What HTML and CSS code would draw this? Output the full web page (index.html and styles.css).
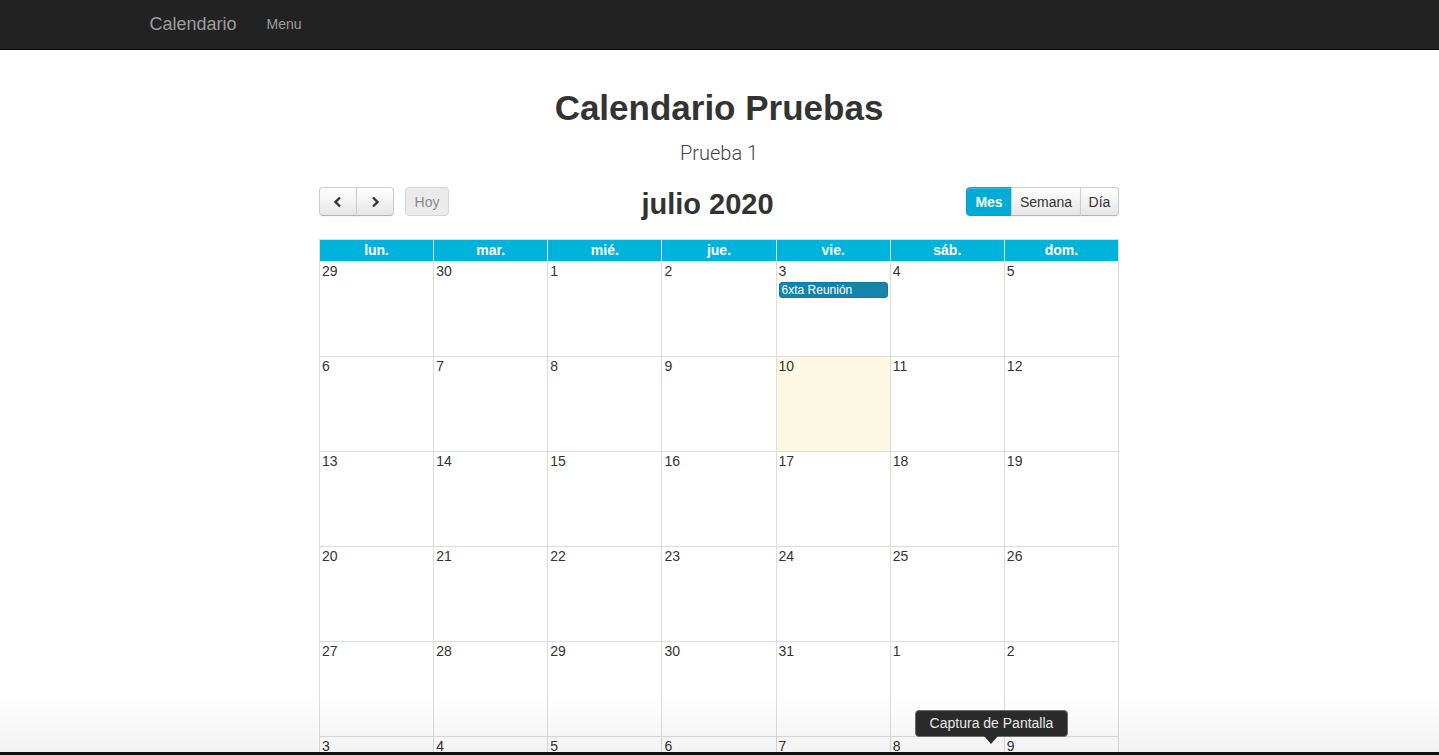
FILE: index.html
```html
<!DOCTYPE html>
<html lang="es">
<head>
<meta charset="utf-8">
<title>Calendario</title>
<link rel="stylesheet" href="styles.css">
</head>
<body>
<nav class="navbar">
  <div class="nav-inner">
    <span class="brand">Calendario</span>
    <span class="nav-link">Menu</span>
  </div>
</nav>

<main class="page">
  <h1 class="title">Calendario Pruebas</h1>
  <p class="subtitle">Prueba 1</p>

  <section class="calendar">
    <div class="toolbar">
      <div class="tb-left">
        <div class="btn-group">
          <button class="btn btn-icon" aria-label="prev">
            <svg width="12" height="12" viewBox="0 0 12 12"><path d="M8 1.5 L3.5 6 L8 10.5" fill="none" stroke="#333" stroke-width="2.4"/></svg>
          </button>
          <button class="btn btn-icon" aria-label="next">
            <svg width="12" height="12" viewBox="0 0 12 12"><path d="M4 1.5 L8.5 6 L4 10.5" fill="none" stroke="#333" stroke-width="2.4"/></svg>
          </button>
        </div>
        <button class="btn btn-disabled">Hoy</button>
      </div>
      <div class="tb-center"><h2 class="month">julio 2020</h2></div>
      <div class="tb-right">
        <div class="btn-group">
          <button class="btn btn-active">Mes</button>
          <button class="btn">Semana</button>
          <button class="btn">Día</button>
        </div>
      </div>
    </div>

    <div class="grid">
      <div class="head">lun.</div><div class="head">mar.</div><div class="head">mié.</div><div class="head">jue.</div><div class="head">vie.</div><div class="head">sáb.</div><div class="head">dom.</div>

      <div class="day">29</div><div class="day">30</div><div class="day">1</div><div class="day">2</div>
      <div class="day">3<div class="event">6xta Reunión</div></div>
      <div class="day">4</div><div class="day">5</div>

      <div class="day">6</div><div class="day">7</div><div class="day">8</div><div class="day">9</div><div class="day today">10</div><div class="day">11</div><div class="day">12</div>

      <div class="day">13</div><div class="day">14</div><div class="day">15</div><div class="day">16</div><div class="day">17</div><div class="day">18</div><div class="day">19</div>

      <div class="day">20</div><div class="day">21</div><div class="day">22</div><div class="day">23</div><div class="day">24</div><div class="day">25</div><div class="day">26</div>

      <div class="day">27</div><div class="day">28</div><div class="day">29</div><div class="day">30</div><div class="day">31</div><div class="day">1</div><div class="day">2</div>

      <div class="day">3</div><div class="day">4</div><div class="day">5</div><div class="day">6</div><div class="day">7</div><div class="day">8</div><div class="day">9</div>
    </div>
  </section>
</main>

<div class="window-shade"></div>
<div class="window-edge"></div>
<div class="tooltip">Captura de Pantalla</div>
</body>
</html>
```

FILE: styles.css
```css
html, body {
  margin: 0;
  padding: 0;
  overflow: hidden;
  height: 100%;
}
body {
  font-family: "Liberation Sans", Arial, sans-serif;
  font-size: 14px;
  color: #333;
  background: #fff;
}

.navbar {
  height: 49px;
  background: #222;
  border-bottom: 1px solid #080808;
}
.nav-inner {
  width: 1140px;
  margin: 0 auto;
  height: 49px;
  display: flex;
  align-items: center;
  gap: 30px;
}
.brand {
  font-size: 18px;
  color: #9d9d9d;
  line-height: 20px;
  margin-top: -2px;
}
.nav-link {
  font-size: 14px;
  color: #9d9d9d;
  line-height: 20px;
  margin-top: -2px;
}

.page {
  text-align: center;
  padding-right: 1px;
}
.title {
  margin: 38px 0 0;
  font-size: 35px;
  line-height: 40px;
  font-weight: 700;
  color: #333;
}
.subtitle {
  margin: 13px 0 0;
  font-family: Roboto, "Liberation Sans", sans-serif;
  font-weight: 300;
  font-size: 20px;
  line-height: 24px;
  color: #444;
}

.calendar {
  width: 800px;
  margin: 22px auto 0;
  text-align: left;
}
.toolbar {
  display: flex;
  align-items: center;
  height: 29px;
  margin-bottom: 23px;
}
.tb-left, .tb-right {
  display: flex;
  align-items: center;
}
.tb-left {
  gap: 11px;
}
.tb-center {
  flex: 1;
  text-align: center;
  padding-top: 4px;
}
.month {
  margin: 0;
  font-size: 29px;
  line-height: 30px;
  font-weight: 700;
  color: #333;
}

.btn-group {
  display: flex;
}
.btn {
  height: 29px;
  padding: 0 8px;
  font-family: "Liberation Sans", Arial, sans-serif;
  font-size: 14px;
  color: #333;
  background: linear-gradient(#ffffff, #e6e6e6);
  border: 1px solid #ccc;
  border-bottom-color: #b3b3b3;
  border-radius: 4px;
  box-shadow: inset 0 1px 0 rgba(255,255,255,.2), 0 1px 2px rgba(0,0,0,.05);
  display: flex;
  align-items: center;
  justify-content: center;
}
.btn-group .btn {
  border-radius: 0;
}
.btn-group .btn + .btn {
  margin-left: -1px;
}
.btn-group .btn:first-child {
  border-radius: 4px 0 0 4px;
}
.btn-group .btn:last-child {
  border-radius: 0 4px 4px 0;
}
.btn-icon {
  width: 38px;
  padding: 0;
}
.btn-disabled {
  width: 44px;
  color: #8a8a8a;
  background: #ebebeb;
  border-color: #d4d4d4;
  box-shadow: none;
}
.btn-active {
  width: 46px;
  background: #00acd6;
  border-color: #00a3cc;
  color: #fff;
  font-weight: 700;
}
.tb-right .btn:nth-child(2) {
  width: 70px;
}
.tb-right .btn:nth-child(3) {
  width: 39px;
}

.grid {
  display: grid;
  grid-template-columns: repeat(7, 1fr);
  grid-template-rows: 22px repeat(6, 95px);
  border-left: 1px solid #ddd;
  border-top: 1px solid #ddd;
}
.head {
  background: #00b3db;
  color: #fff;
  font-weight: 700;
  text-align: center;
  font-size: 14px;
  line-height: 20px;
  border-right: 1px solid #ddd;
  border-bottom: 1px solid #ddd;
}
.day {
  border-right: 1px solid #ddd;
  border-bottom: 1px solid #ddd;
  padding: 1px 2px 0 2px;
  font-size: 14px;
  line-height: 17px;
  color: #333;
}
.today {
  background: #fcf8e3;
}
.event {
  margin: 2px 0 0 0;
  background: #1484ab;
  border: 1px solid #127aa0;
  border-radius: 3px;
  color: #fff;
  font-size: 12px;
  line-height: 14px;
  padding: 0 2px;
  height: 14px;
}

.window-shade {
  position: fixed;
  left: 0;
  right: 0;
  bottom: 0;
  height: 60px;
  background: linear-gradient(rgba(0,0,0,0), rgba(0,0,0,0.05));
  pointer-events: none;
}
.window-edge {
  position: fixed;
  left: 0;
  right: 0;
  bottom: 0;
  height: 3px;
  background: #111;
}

.tooltip {
  position: fixed;
  left: 915px;
  top: 710px;
  width: 151px;
  height: 25px;
  background: #2b2b2b;
  border: 1px solid #6a6a6a;
  border-radius: 4px;
  color: #e8e8e8;
  font-size: 14px;
  line-height: 25px;
  text-align: center;
}
.tooltip::after {
  content: "";
  position: absolute;
  left: 68px;
  bottom: -8px;
  border-left: 7px solid transparent;
  border-right: 7px solid transparent;
  border-top: 8px solid #2b2b2b;
}
```
